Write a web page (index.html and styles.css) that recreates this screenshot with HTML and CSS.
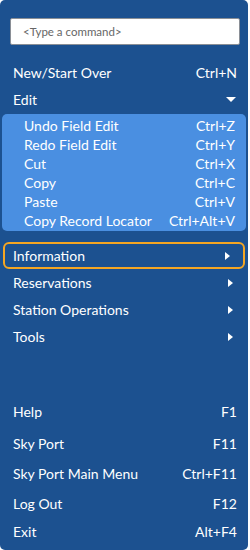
FILE: index.html
```html
<!DOCTYPE html>
<html>
	<head>
		<meta charset="utf-8">
		<title>Command Menu</title>
		<link rel="stylesheet" href="styles.css">
	</head>
	<body>
		<div class="menu">
			<div class="search">
				<input type="text" class="command" placeholder="<Type a command>">
			</div>

			<div class="item"><span>New/Start Over</span><span>Ctrl+N</span></div>
			<div class="item"><span>Edit</span><span class="caret"></span></div>

			<div class="submenu">
				<div class="subitem"><span>Undo Field Edit</span><span>Ctrl+Z</span></div>
				<div class="subitem"><span>Redo Field Edit</span><span>Ctrl+Y</span></div>
				<div class="subitem"><span>Cut</span><span>Ctrl+X</span></div>
				<div class="subitem"><span>Copy</span><span>Ctrl+C</span></div>
				<div class="subitem"><span>Paste</span><span>Ctrl+V</span></div>
				<div class="subitem"><span>Copy Record Locator</span><span>Ctrl+Alt+V</span></div>
			</div>

			<div class="item focused"><span>Information</span><span class="arrow"></span></div>
			<div class="item"><span>Reservations</span><span class="arrow"></span></div>
			<div class="item"><span>Station Operations</span><span class="arrow"></span></div>
			<div class="item"><span>Tools</span><span class="arrow"></span></div>

			<div class="footer">
				<div class="item tall help"><span>Help</span><span>F1</span></div>
				<div class="item tall"><span>Sky Port</span><span>F11</span></div>
				<div class="item tall"><span>Sky Port Main Menu</span><span>Ctrl+F11</span></div>
				<div class="item tall"><span>Log Out</span><span>F12</span></div>
				<div class="item tall last"><span>Exit</span><span>Alt+F4</span></div>
			</div>
		</div>
	</body>
</html>
```

FILE: styles.css
```css
body{
	margin:0;
	background-color:#fff;
	font-family:Lato, "Open Sans", sans-serif;
	font-size:14px;
	color:#fff;
}
div.menu{
	width:248px;
	height:550px;
	box-sizing:border-box;
	padding-top:18px;
	background-color:#1c5190;
	border-radius:5px;
}
div.search{
	margin:0 8px 14px 10px;
}
input.command{
	display:block;
	width:100%;
	height:27px;
	box-sizing:border-box;
	padding:0 12px;
	border:1px solid #8a8f96;
	border-radius:2px;
	background-color:#fff;
	font-family:Lato, sans-serif;
	font-size:11.5px;
	color:#333;
}
input.command::placeholder{
	color:#666;
}
div.item{
	display:flex;
	justify-content:space-between;
	align-items:center;
	height:27px;
	padding:0 11px 0 13px;
}
div.item.focused{
	margin:11px 3px 0 3px;
	padding:0 9px 0 8px;
	border:2px solid #f5a623;
	border-radius:6px;
	height:23px;
}
div.submenu{
	margin:1px 2px 0 2px;
	padding:2px 0 1px 0;
	background-color:#4a8fe1;
	border-radius:5px;
}
div.subitem{
	display:flex;
	justify-content:space-between;
	align-items:center;
	height:19px;
	padding:0 11px 0 22px;
}
div.footer{
	margin-top:46px;
}
div.item.tall{
	height:30px;
}
div.item.help{
	margin-bottom:2px;
}
div.item.last{
	height:26px;
}
span.arrow{
	width:0;
	height:0;
	margin-right:4px;
	border-top:4px solid transparent;
	border-bottom:4px solid transparent;
	border-left:5px solid #fff;
}
span.caret{
	width:0;
	height:0;
	margin-right:1px;
	border-left:5px solid transparent;
	border-right:5px solid transparent;
	border-top:5px solid #fff;
}
```
